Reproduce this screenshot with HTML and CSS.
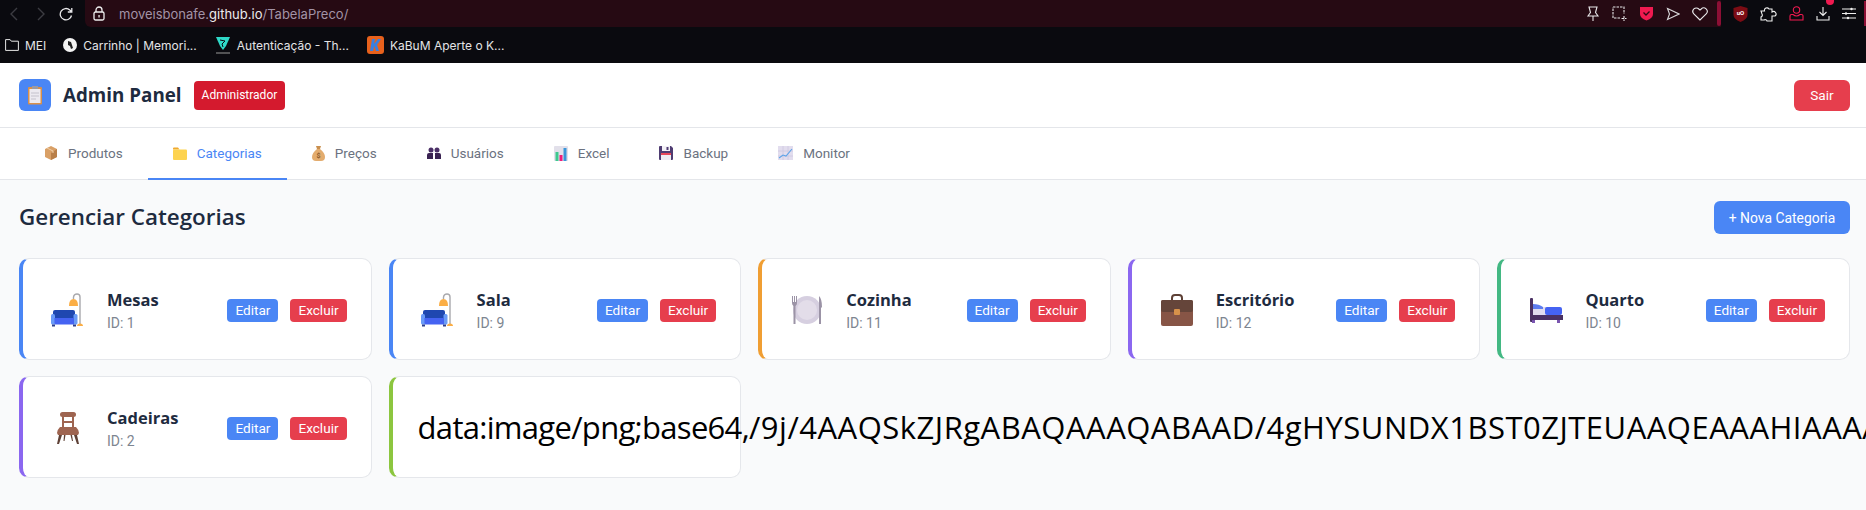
FILE: index.html
```html
<!DOCTYPE html>
<html lang="pt-BR">

<head>
    <meta charset="UTF-8">
    <meta name="viewport" content="width=device-width, initial-scale=1.0">
    <title>Admin Panel</title>
    <link rel="stylesheet" href="styles.css">
</head>

<body>
    <svg class="defs" width="0" height="0">
        <symbol id="sofa" viewBox="0 0 34 34">
            <path d="M29 31V4q0-3-3-3t-3.500 3v2" fill="none" stroke="#a9a9ad" stroke-width="1.400"/>
            <path d="M18 13q0-7 4.500-7t4.500 7z" fill="#fbae45"/>
            <path d="M26 33q0-2.500 3-2.500t3 2.500z" fill="#fbae45"/>
            <rect x="2" y="17" width="22" height="9" rx="2" fill="#1f47b0"/>
            <rect x="0" y="21" width="4" height="10.500" rx="1.500" fill="#6a9bf7"/>
            <rect x="22.500" y="21" width="4" height="10.500" rx="1.500" fill="#6a9bf7"/>
            <rect x="3.500" y="25" width="19.500" height="6.500" fill="#4563f2"/>
            <rect x="1" y="31.500" width="3" height="2" fill="#2c3f8c"/>
            <rect x="22" y="31.500" width="3" height="2" fill="#2c3f8c"/>
        </symbol>
    </svg>

    <div class="toolbar">
        <svg class="tb-back" width="12" height="16" viewBox="0 0 12 16"><path d="M9 2L3 8l6 6" fill="none" stroke="#3c3c42" stroke-width="1.400"/></svg>
        <svg class="tb-forward" width="12" height="16" viewBox="0 0 12 16"><path d="M3 2l6 6-6 6" fill="none" stroke="#3c3c42" stroke-width="1.400"/></svg>
        <svg class="tb-reload" width="14" height="14" viewBox="0 0 14 14"><path d="M12.500 8.500A5.700 5.700 0 1 1 10.800 3L12.500 4.500M12.800 1v4h-4" fill="none" stroke="#e8e8ea" stroke-width="1.300"/></svg>
        <div class="address">
            <svg class="lock" width="12" height="15" viewBox="0 0 12 15"><path d="M3 6V4a3 3 0 0 1 6 0v2" fill="none" stroke="#eee" stroke-width="1.300"/><rect x="1" y="6" width="10" height="8" rx="1.500" fill="none" stroke="#eee" stroke-width="1.300"/><rect x="5.400" y="9" width="1.300" height="2.500" fill="#eee"/></svg>
            <span class="url">moveisbonafe.<b>github.io</b>/TabelaPreco/</span>
            <div class="address-icons">
                <svg width="14" height="16" viewBox="0 0 14 16"><path d="M3 1h8L9.500 6.500 12 10H2l2.500-3.500zM7 10v5" fill="none" stroke="#e8e8ea" stroke-width="1.100"/></svg>
                <svg width="15" height="15" viewBox="0 0 15 15"><path d="M1 1h11v7M8 12H1V1M12 10v5M9.500 12.500h5" fill="none" stroke="#e8e8ea" stroke-width="1.100" stroke-dasharray="2.500 1"/></svg>
                <svg width="15" height="15" viewBox="0 0 15 15"><path d="M1 1h13v7q0 4-6.500 6.500Q1 12 1 8z" fill="#f01a50"/><path d="M4.500 6.500l2.500 2.500 3.500-3.500" fill="none" stroke="#2a0a14" stroke-width="1.300"/></svg>
                <svg width="14" height="14" viewBox="0 0 14 14"><path d="M1.500 1.500L13 7 1.500 12.500 3.500 7z" fill="none" stroke="#d8d8da" stroke-width="1.100"/></svg>
                <svg width="16" height="14" viewBox="0 0 16 14"><path d="M8 13L1.800 6.800a3.400 3.400 0 0 1 5-4.800L8 3l1.200-1a3.400 3.400 0 0 1 5 4.800z" fill="none" stroke="#e8e8ea" stroke-width="1.100"/></svg>
            </div>
            <span class="address-tick"></span>
        </div>
        <div class="toolbar-icons">
            <svg width="15" height="16" viewBox="0 0 15 16"><path d="M7.500 0L14.500 2v7q0 4-7 7-7-3-7-7V2z" fill="#7c0c14"/><text x="7.500" y="8.500" class="ublock-text" text-anchor="middle">uO</text></svg>
            <svg width="17" height="16" viewBox="0 0 17 16"><path d="M1 5h3.500a2.500 2.500 0 0 1 4.500-2h3v3a2.200 2.200 0 0 1 3 4h-3v5H7a2 2 0 0 0-3-1L1 14v-3a2 2 0 0 0 1-3z" fill="none" stroke="#f0f0f0" stroke-width="1.100"/></svg>
            <svg width="15" height="15" viewBox="0 0 15 15"><circle cx="7.500" cy="4" r="3.200" fill="none" stroke="#f01a50" stroke-width="1.100"/><path d="M4 8.500H2.500A1.500 1.500 0 0 0 1 10v4h13v-4a1.500 1.500 0 0 0-1.500-1.500H11q-3.500 3-7 0z" fill="none" stroke="#f01a50" stroke-width="1.100"/></svg>
            <div class="download">
                <svg width="14" height="15" viewBox="0 0 14 15"><path d="M7 1v8M3.500 6L7 9.500 10.500 6M1 10v4h12v-4" fill="none" stroke="#f0f0f0" stroke-width="1.100"/></svg>
                <span class="dl-dot"></span>
            </div>
            <svg width="14" height="13" viewBox="0 0 14 13"><path d="M0 2h14M0 6.500h14M0 11h14" stroke="#f0f0f0" stroke-width="1"/><circle cx="9.500" cy="2" r="1.200" fill="#f0f0f0"/><circle cx="4" cy="6.500" r="1.200" fill="#f0f0f0"/><circle cx="6" cy="11" r="1.200" fill="#f0f0f0"/></svg>
        </div>
        <span class="edge-tick"></span>
    </div>

    <div class="bookmarks">
        <a class="bookmark bm-mei">
            <svg width="14" height="12" viewBox="0 0 14 12"><path d="M.6.600h4.500l1.200 1.600h7.100v9.200H.6z" fill="none" stroke="#e6e6e6"/></svg>
            MEI
        </a>
        <a class="bookmark bm-carrinho">
            <svg width="14" height="14" viewBox="0 0 14 14"><circle cx="7" cy="7" r="7" fill="#f4f4f4"/><path d="M5 3l3 1 1 3 1 3-2 1-1-3-2-1z" fill="#222"/></svg>
            Carrinho | Memori...
        </a>
        <a class="bookmark bm-auth">
            <svg width="16" height="18" viewBox="0 0 16 18"><path d="M1 1h14l-4 9-3 4-3-4z" fill="#2fd9c8"/><path d="M5 4l5 1-3 3 1 3" fill="none" stroke="#0a0a0f"/><path d="M1 17h14" stroke="#9a9a9a"/></svg>
            Autenticação - Th...
        </a>
        <a class="bookmark bm-kabum">
            <svg width="17" height="18" viewBox="0 0 17 18"><rect width="17" height="18" rx="3" fill="#e8611c"/><path d="M5 3h3L7 8l4-5h3l-4 6 2 6H9L7.500 10 6 15H3z" fill="#3b7fe0"/></svg>
            KaBuM Aperte o K...
        </a>
    </div>

    <header class="app-header">
        <div class="brand">
            <span class="brand-logo">
                <svg width="16" height="20" viewBox="0 0 16 20"><rect x="1" y="2" width="14" height="17.500" rx="1" fill="#d9904a"/><rect x="2.500" y="4" width="11" height="14" fill="#eceaf0"/><rect x="5" y="1" width="6" height="3" fill="#9a9aa5"/><path d="M4 8h8M4 11h8M4 14h5" stroke="#c4c2cc" stroke-width="1"/></svg>
            </span>
            <h1 class="brand-title">Admin Panel</h1>
            <span class="badge">Administrador</span>
        </div>
        <button class="btn-logout">Sair</button>
    </header>

    <nav class="tabs">
        <a class="tab">
            <svg width="14" height="14" viewBox="0 0 14 14"><path d="M7 0l6 3v8l-6 3-6-3V3z" fill="#d9a066"/><path d="M7 7l6-4v8l-6 3z" fill="#b97f48"/><path d="M3 2l6 3v2" fill="none" stroke="#f0cfa8"/></svg>
            Produtos
        </a>
        <a class="tab tab-active">
            <svg width="14" height="13" viewBox="0 0 14 13"><path d="M0 1.500A1 1 0 0 1 1 .5h4l1.500 2H0z" fill="#f0a92e"/><rect y="2.500" width="14" height="10.500" rx="1" fill="#fdd34f"/></svg>
            Categorias
        </a>
        <a class="tab">
            <svg width="13" height="15" viewBox="0 0 13 15"><path d="M4 0h5L8 3h-3z" fill="#c98f4e"/><path d="M5 3h3q5 4 5 8 0 4-4 4H4q-4 0-4-4 0-4 5-8z" fill="#e3ac6e"/><text x="6.500" y="12" class="money-text" text-anchor="middle">$</text></svg>
            Preços
        </a>
        <a class="tab">
            <svg width="14" height="12" viewBox="0 0 14 12"><circle cx="4" cy="3" r="2.500" fill="#4a2f66"/><circle cx="10" cy="3" r="2.500" fill="#4a2f66"/><path d="M0 12V8q0-2 2-2h4v6zM8 12V6h4q2 0 2 2v4z" fill="#3a2352"/></svg>
            Usuários
        </a>
        <a class="tab">
            <svg width="14" height="15" viewBox="0 0 14 15"><rect width="14" height="15" rx="1" fill="#e2e0ea"/><rect x="1.500" y="6" width="3" height="9" fill="#3ec98f"/><rect x="5.500" y="9" width="3" height="6" fill="#ee1d7a"/><rect x="9.500" y="2" width="3" height="13" fill="#3a96d9"/></svg>
            Excel
        </a>
        <a class="tab">
            <svg width="14" height="14" viewBox="0 0 14 14"><path d="M1 0h11l2 2v11a1 1 0 0 1-1 1H1a1 1 0 0 1-1-1V1a1 1 0 0 1 1-1z" fill="#4f3d72"/><rect x="3" y="0" width="8" height="5" fill="#f4f2f7"/><rect x="7.500" y="1" width="2" height="3" fill="#4f3d72"/><rect x="2" y="7" width="10" height="7" fill="#efedf2"/><rect x="2" y="7" width="10" height="2" fill="#e8485a"/></svg>
            Backup
        </a>
        <a class="tab">
            <svg width="15" height="14" viewBox="0 0 15 14"><rect width="15" height="14" fill="#e2ddee"/><path d="M5 0v14M10 0v14M0 5h15M0 10h15" stroke="#cfc9df" stroke-width=".8"/><path d="M1 12l4-3 3 1 6-7" fill="none" stroke="#5da3e8" stroke-width="1.100"/></svg>
            Monitor
        </a>
    </nav>

    <main class="content">
        <div class="content-head">
            <h2 class="content-title">Gerenciar Categorias</h2>
            <button class="btn-new">+ Nova Categoria</button>
        </div>

        <div class="cat-grid">
            <div class="cat-card accent-blue">
                <div class="cat-icon"><svg class="icon-sofa" width="34" height="34"><use href="#sofa"/></svg></div>
                <div class="cat-info">
                    <div class="cat-name">Mesas</div>
                    <div class="cat-id">ID: 1</div>
                </div>
                <div class="cat-actions">
                    <button class="btn-edit">Editar</button>
                    <button class="btn-delete">Excluir</button>
                </div>
            </div>
            <div class="cat-card accent-blue">
                <div class="cat-icon"><svg class="icon-sofa" width="34" height="34"><use href="#sofa"/></svg></div>
                <div class="cat-info">
                    <div class="cat-name">Sala</div>
                    <div class="cat-id">ID: 9</div>
                </div>
                <div class="cat-actions">
                    <button class="btn-edit">Editar</button>
                    <button class="btn-delete">Excluir</button>
                </div>
            </div>
            <div class="cat-card accent-orange">
                <div class="cat-icon">
                    <svg width="34" height="30" viewBox="0 0 34 30"><circle cx="17" cy="15" r="14" fill="#d6cfe0"/><circle cx="17" cy="15" r="10" fill="#e3dde9"/><path d="M2 1v7q0 2 1.500 3v18h2V11Q7 10 7 8V1H6v6H5V1H4v6H3V1z" fill="#9b93a6"/><path d="M29 1q3 3 3 11l-1 1v16h-2z" fill="#9b93a6"/></svg>
                </div>
                <div class="cat-info">
                    <div class="cat-name">Cozinha</div>
                    <div class="cat-id">ID: 11</div>
                </div>
                <div class="cat-actions">
                    <button class="btn-edit">Editar</button>
                    <button class="btn-delete">Excluir</button>
                </div>
            </div>
            <div class="cat-card accent-purple">
                <div class="cat-icon">
                    <svg width="32" height="32" viewBox="0 0 32 32"><path d="M11 7V4q0-3 3-3h4q3 0 3 3v3" fill="none" stroke="#5e4136" stroke-width="2"/><rect y="6" width="32" height="26" rx="2" fill="#875546"/><path d="M0 8a2 2 0 0 1 2-2h28a2 2 0 0 1 2 2v8q0 2-2 2H2q-2 0-2-2z" fill="#65453a"/><rect x="13" y="15" width="6" height="6" rx="1" fill="#d8924a"/></svg>
                </div>
                <div class="cat-info">
                    <div class="cat-name">Escritório</div>
                    <div class="cat-id">ID: 12</div>
                </div>
                <div class="cat-actions">
                    <button class="btn-edit">Editar</button>
                    <button class="btn-delete">Excluir</button>
                </div>
            </div>
            <div class="cat-card accent-green">
                <div class="cat-icon">
                    <svg width="33" height="25" viewBox="0 0 33 25"><rect y="0" width="3" height="24" rx="1" fill="#4a3163"/><rect x="3" y="17" width="30" height="5" fill="#4a3163"/><rect x="3" y="9" width="14" height="8" fill="#e0dcee"/><path d="M3 6q6 0 10 3v2H3z" fill="#5d7cf0"/><rect x="15" y="9" width="17" height="8" rx="2" fill="#4563f2"/><rect x="2" y="22" width="3" height="3" fill="#7a55b0"/><rect x="27" y="22" width="3" height="3" fill="#7a55b0"/></svg>
                </div>
                <div class="cat-info">
                    <div class="cat-name">Quarto</div>
                    <div class="cat-id">ID: 10</div>
                </div>
                <div class="cat-actions">
                    <button class="btn-edit">Editar</button>
                    <button class="btn-delete">Excluir</button>
                </div>
            </div>
            <div class="cat-card accent-violet">
                <div class="cat-icon">
                    <svg width="22" height="32" viewBox="0 0 22 32"><rect x="3" y="0" width="16" height="5" rx="2.500" fill="#9e6450"/><path d="M5 4h2v12H5zM15 4h2v12h-2z" fill="#9e6450"/><rect x="6" y="9" width="10" height="2" fill="#9e6450"/><path d="M3 15h16q3 3 3 6l-1 2H1l-1-2q0-3 3-6z" fill="#9e6450"/><path d="M2 23h3l-3 9H0zM17 23h3l2 9h-2zM7 23h1.500l-1 6H6.500zM13.500 23H15l1 6h-1z" fill="#5e4136"/></svg>
                </div>
                <div class="cat-info">
                    <div class="cat-name">Cadeiras</div>
                    <div class="cat-id">ID: 2</div>
                </div>
                <div class="cat-actions">
                    <button class="btn-edit">Editar</button>
                    <button class="btn-delete">Excluir</button>
                </div>
            </div>
            <div class="cat-card accent-lime">
                <div class="cat-raw"><span class="cat-raw-head">data:image/png;base64,</span>/9j/4AAQSkZJRgABAQAAAQABAAD/4gHYSUNDX1BST0ZJTEUAAQEAAAHIAAAAAAQwAABtbnRy</div>
            </div>
        </div>
    </main>
</body>

</html>
```

FILE: styles.css
```css
* {
    padding: 0;
    margin: 0;
    box-sizing: border-box;
}

html,
body {
    height: 100%;
    overflow: hidden;
}

body {
    font-family: Roboto, "Liberation Sans", sans-serif;
    background-color: #f9fafb;
    display: flex;
    flex-direction: column;
}

button {
    border: none;
    font-family: Roboto, "Liberation Sans", sans-serif;
    color: #fff;
}

.defs {
    position: absolute;
}

/* browser chrome */
.toolbar {
    height: 27px;
    flex: none;
    display: flex;
    align-items: center;
    background-color: #0a0a0f;
}

.tb-back {
    margin-left: 8px;
}

.tb-forward {
    margin-left: 15px;
}

.tb-reload {
    margin-left: 12px;
}

.address {
    width: 1636px;
    height: 27px;
    margin-left: 12px;
    padding-left: 8px;
    display: flex;
    align-items: center;
    background-color: #260a13;
    border-bottom-left-radius: 6px;
}

.url {
    margin-left: 14px;
    font-family: Inter, sans-serif;
    font-size: 13px;
    color: #a293a6;
}

.url b {
    font-weight: 400;
    color: #eceaee;
}

.address-icons {
    margin-left: auto;
    display: flex;
    align-items: center;
    gap: 12px;
    margin-right: 9px;
}

.address-tick {
    width: 4px;
    height: 25px;
    border-radius: 2px;
    background-color: #8c0f35;
}

.toolbar-icons {
    margin-left: 12px;
    display: flex;
    align-items: center;
    gap: 12px;
}

.download {
    position: relative;
    display: flex;
}

.dl-dot {
    position: absolute;
    top: -9px;
    right: -4px;
    width: 8px;
    height: 8px;
    border-radius: 50%;
    background-color: #f01a50;
}

.edge-tick {
    margin-left: auto;
    width: 2px;
    height: 25px;
    background-color: #8c0f35;
}

.ublock-text {
    font-size: 6px;
    font-weight: 700;
    fill: #fff;
}

.bookmarks {
    height: 36px;
    flex: none;
    display: flex;
    align-items: center;
    padding-left: 5px;
    background-color: #0a0a0f;
    font-family: Inter, sans-serif;
}

.bookmark {
    display: flex;
    align-items: center;
    gap: 6px;
    font-size: 12px;
    color: #e4e4e6;
}

.bm-carrinho {
    margin-left: 17px;
}

.bm-auth {
    margin-left: 18px;
}

.bm-kabum {
    margin-left: 18px;
}

/* page header */
.app-header {
    height: 65px;
    flex: none;
    display: flex;
    align-items: center;
    justify-content: space-between;
    padding: 0 16px 0 19px;
    background-color: #fff;
    border-bottom: 1px solid #e4e6ea;
}

.brand {
    display: flex;
    align-items: center;
}

.brand-logo {
    width: 32px;
    height: 32px;
    display: flex;
    align-items: center;
    justify-content: center;
    border-radius: 6px;
    background-color: #4a86f5;
}

.brand-title {
    margin-left: 12px;
    font-family: "Open Sans", sans-serif;
    font-size: 18.800px;
    font-weight: 700;
    color: #1e2b3f;
}

.badge {
    margin-left: 12px;
    height: 29px;
    padding: 0 8px;
    display: flex;
    align-items: center;
    border-radius: 4px;
    background-color: #d41a2e;
    font-size: 12px;
    color: #fff;
}

.btn-logout {
    width: 56px;
    height: 31px;
    border-radius: 6px;
    background-color: #e63e4d;
    font-size: 13.600px;
}

/* tabs */
.tabs {
    height: 52px;
    flex: none;
    display: flex;
    padding-left: 19px;
    background-color: #fff;
    border-bottom: 1px solid #e4e6ea;
}

.tab {
    display: flex;
    align-items: center;
    gap: 10px;
    padding: 0 25px;
    margin-bottom: -1px;
    border-bottom: 2px solid transparent;
    font-size: 13.500px;
    color: #6b7280;
}

.tab-active {
    color: #4a86f5;
    border-bottom-color: #4a86f5;
}

.money-text {
    font-size: 7px;
    font-weight: 700;
    fill: #8a5a2b;
}

/* content */
.content {
    flex: 1;
    min-width: 0;
    padding: 19px 16px 0 19px;
}

.content-head {
    display: flex;
    align-items: center;
    justify-content: space-between;
    margin-bottom: 24px;
    padding-top: 2px;
}

.content-title {
    margin-top: -2px;
    font-family: "Open Sans", sans-serif;
    font-size: 22.400px;
    font-weight: 600;
    color: #1e2b3f;
}

.btn-new {
    width: 136px;
    height: 33px;
    border-radius: 6px;
    background-color: #4a86f5;
    font-size: 13.900px;
}

.cat-grid {
    display: grid;
    grid-template-columns: repeat(5, minmax(0, 1fr));
    grid-auto-rows: 102px;
    gap: 16px 17px;
}

.cat-card {
    min-width: 0;
    display: flex;
    align-items: center;
    padding: 2px 24px 0 21px;
    background-color: #fff;
    border: 1px solid #e5e7eb;
    border-left-width: 4px;
    border-radius: 10px;
}

.accent-blue {
    border-left-color: #4a86f5;
}

.accent-orange {
    border-left-color: #f09e33;
}

.accent-purple {
    border-left-color: #8b67f0;
}

.accent-green {
    border-left-color: #43b883;
}

.accent-violet {
    border-left-color: #8b67f0;
}

.accent-lime {
    border-left-color: #8cc63f;
}

.cat-icon {
    width: 48px;
    flex: none;
    display: flex;
    justify-content: center;
}

.cat-info {
    margin-left: 15px;
    margin-top: -1px;
    flex: 1;
    min-width: 0;
}

.cat-name {
    font-family: "Open Sans", sans-serif;
    font-size: 16.500px;
    font-weight: 700;
    color: #1e2b3f;
}

.cat-id {
    margin-top: 4px;
    font-size: 14px;
    color: #7d8590;
}

.cat-actions {
    display: flex;
    gap: 12px;
}

.btn-edit,
.btn-delete {
    height: 23px;
    padding: 0 8px;
    border-radius: 4px;
    font-size: 13.600px;
}

.btn-edit {
    background-color: #4a86f5;
}

.btn-delete {
    background-color: #e63e4d;
}

.cat-raw {
    padding-left: 4px;
    margin-top: -2px;
    white-space: nowrap;
    font-family: "Open Sans", sans-serif;
    font-size: 31px;
    letter-spacing: .5px;
    color: #000;
}

.cat-raw-head {
    letter-spacing: -.7px;
}
```
